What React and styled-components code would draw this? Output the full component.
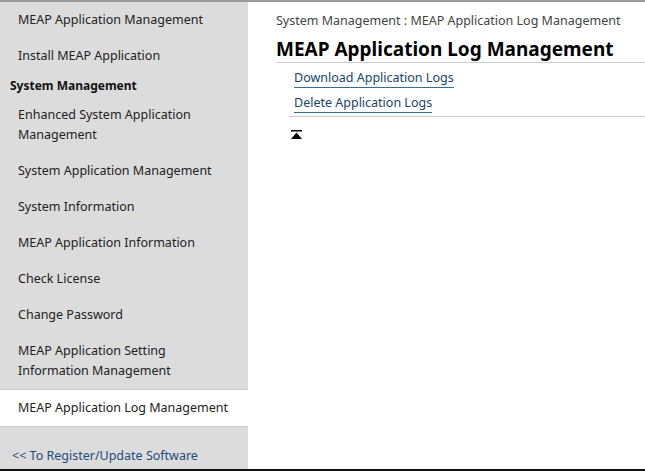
import React from "react";
import styled, { createGlobalStyle } from "styled-components";

const Global = createGlobalStyle`
  body { margin: 0; font-family: "Noto Sans", "DejaVu Sans", sans-serif; }
`;

const Page = styled.div`
  width: 645px;
  height: 471px;
  display: flex;
  border-top: 2px solid #9a9a9a;
  border-bottom: 2px solid #111;
  box-sizing: border-box;
  overflow: hidden;
`;

const Side = styled.nav`
  width: 248px;
  flex: none;
  background: #dcdcdc;
  display: flex;
  flex-direction: column;
`;

const Item = styled.div`
  padding: 8px 18px;
  font-size: 12.5px;
  line-height: 20px;
  color: #222;
  background: ${p => (p.$active ? "#fff" : "transparent")};
  border-top: ${p => (p.$active ? "1px solid #ccc" : "none")};
  border-bottom: ${p => (p.$active ? "1px solid #ccc" : "none")};
`;

const Heading = styled.div`
  padding: 4px 10px 3px;
  font-size: 12px;
  line-height: 16px;
  font-weight: bold;
  color: #111;
`;

const Back = styled.a`
  margin-top: 20px;
  padding: 0 12px;
  font-size: 12.5px;
  color: #1c4d7c;
  text-decoration: none;
`;

const Main = styled.main`
  flex: 1;
  padding: 10px 0 0 28px;
`;

const Crumb = styled.div`
  font-size: 12.5px;
  color: #444;
  line-height: 18px;
`;

const Title = styled.h1`
  margin: 8px 0 0;
  font-size: 19px;
  line-height: 22px;
  font-weight: bold;
  color: #000;
  padding-bottom: 2px;
  border-bottom: 1px solid #ccc;
`;

const Links = styled.div`
  margin-left: 13px;
  padding: 6px 5px 3px;
  border-bottom: 1px solid #ccc;
  display: flex;
  flex-direction: column;
  align-items: flex-start;
  gap: 6px;
`;

const LinkItem = styled.a`
  font-size: 12.5px;
  line-height: 18px;
  color: #17456a;
  text-decoration: none;
  border-bottom: 1px solid #2f6f8f;
`;

const Top = styled.div`
  margin: 5px 0 0 15px;
`;

export default function App() {
  return (
    <>
      <Global />
      <Page>
        <Side>
          <Item>MEAP Application Management</Item>
          <Item>Install MEAP Application</Item>
          <Heading>System Management</Heading>
          <Item>Enhanced System Application Management</Item>
          <Item>System Application Management</Item>
          <Item>System Information</Item>
          <Item>MEAP Application Information</Item>
          <Item>Check License</Item>
          <Item>Change Password</Item>
          <Item>MEAP Application Setting Information Management</Item>
          <Item $active>MEAP Application Log Management</Item>
          <Back href="#">&lt;&lt; To Register/Update Software</Back>
        </Side>
        <Main>
          <Crumb>System Management : MEAP Application Log Management</Crumb>
          <Title>MEAP Application Log Management</Title>
          <Links>
            <LinkItem href="#">Download Application Logs</LinkItem>
            <LinkItem href="#">Delete Application Logs</LinkItem>
          </Links>
          <Top>
            <svg width="11" height="9" viewBox="0 0 11 9">
              <rect x="0" y="0" width="11" height="1.5" fill="#000" />
              <polygon points="5.5,2.5 11,9 0,9" fill="#000" />
            </svg>
          </Top>
        </Main>
      </Page>
    </>
  );
}
